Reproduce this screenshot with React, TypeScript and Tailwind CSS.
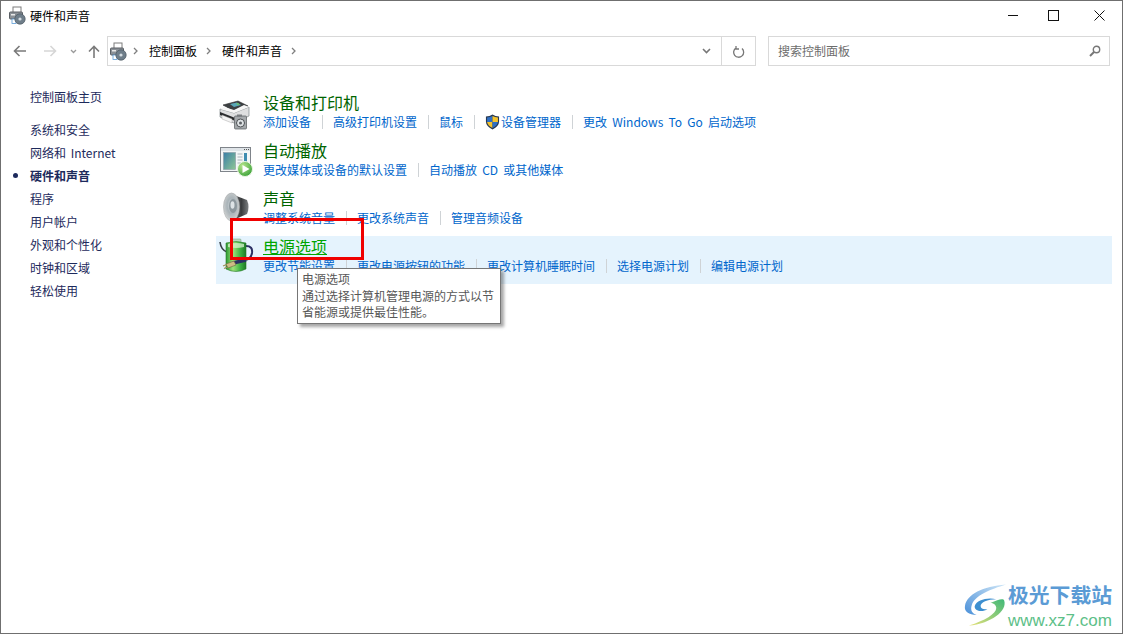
import React from "react";

const font = { fontFamily: '"Noto Sans CJK SC", "Noto Sans", sans-serif' };

function SmallDeviceIcon({ className = "" }: { className?: string }) {
  return (
    <svg viewBox="0 0 17 19" width="17" height="19" className={className}>
      <rect x="4" y="1" width="8" height="6" fill="#fff" stroke="#7d7d7d" />
      <rect x="0.5" y="6" width="13" height="7" rx="1" fill="#8a9096" stroke="#5a5f64" />
      <rect x="2" y="8" width="4" height="1.5" fill="#e8e8e8" />
      <rect x="3" y="13" width="4" height="4.5" fill="#fff" stroke="#5b9bd5" strokeWidth="0.8" />
      <circle cx="11" cy="13" r="5.2" fill="#6f7e8a" stroke="#4c5861" strokeWidth="0.7" />
      <circle cx="11" cy="13" r="1.6" fill="#d5dde2" />
    </svg>
  );
}

function PrinterIcon() {
  return (
    <svg viewBox="0 0 40 48" width="40" height="48">
      <path d="M7 13 L22 9 L32 14 L18 19 Z" fill="#3c3f42" stroke="#26282a" strokeWidth="0.6" />
      <path d="M14 12 L21 10.5 L25 13 L18 15 Z" fill="#5aa7b8" />
      <path d="M20 11.5 L22 11 L24 12.5 L22 13.2 Z" fill="#6cc06a" />
      <path d="M4 17 L18 21 L33 15 L33 24 L18 31 L4 25 Z" fill="#dedfe0" stroke="#80868a" strokeWidth="0.7" />
      <path d="M4 17 L18 21 L33 15 L28 13 L18 18 L8 15 Z" fill="#f6f6f6" />
      <path d="M4 20 L18 25.5 L18 28.5 L4 23 Z" fill="#2a2c2e" />
      <path d="M6 23 L16 27 L16 31 L6 27 Z" fill="#f3f3f3" stroke="#999" strokeWidth="0.4" />
      <rect x="18.5" y="24" width="12" height="13" rx="1" fill="#a5a9ac" stroke="#55595c" strokeWidth="0.7" />
      <rect x="21" y="22.5" width="5" height="2" fill="#777b7e" />
      <circle cx="24.5" cy="31" r="4" fill="#dfe3e5" stroke="#4d5154" strokeWidth="1" />
      <circle cx="24.5" cy="31" r="1.5" fill="#5c6064" />
    </svg>
  );
}

function AutoplayIcon() {
  return (
    <svg viewBox="0 0 40 48" width="40" height="48">
      <defs>
        <linearGradient id="ap" x1="0" y1="0" x2="1" y2="1">
          <stop offset="0" stopColor="#3a7fa8" />
          <stop offset="1" stopColor="#8fc694" />
        </linearGradient>
        <radialGradient id="pl" cx="0.35" cy="0.3" r="0.9">
          <stop offset="0" stopColor="#b8e68d" />
          <stop offset="1" stopColor="#24952a" />
        </radialGradient>
      </defs>
      <rect x="4.5" y="7.5" width="30" height="24" fill="#f4f6f7" stroke="#7f848a" />
      <rect x="5" y="8" width="29" height="3" fill="#dfe4e8" />
      <path d="M28 9.5h1M30 9.5h1M32 9.5h1" stroke="#555" />
      <rect x="7.5" y="12.5" width="12" height="17" fill="url(#ap)" stroke="#8a9aa5" strokeWidth="0.6" />
      <path d="M21.5 14h5M21.5 17h5M21.5 20h5M21.5 23h4" stroke="#a9b2b8" />
      <rect x="28" y="13" width="3" height="10" fill="#3f8cb0" />
      <circle cx="29" cy="29" r="7.5" fill="url(#pl)" stroke="#eaf6e2" strokeWidth="1" />
      <path d="M26.5 25 L33.5 29 L26.5 33 Z" fill="#fff" />
    </svg>
  );
}

function SpeakerIcon() {
  return (
    <svg viewBox="0 0 40 48" width="40" height="48">
      <defs>
        <radialGradient id="sp" cx="0.5" cy="0.45" r="0.6">
          <stop offset="0" stopColor="#dfe5e8" />
          <stop offset="0.45" stopColor="#a9b3b8" />
          <stop offset="0.8" stopColor="#c6cacb" />
          <stop offset="1" stopColor="#f4f4f4" />
        </radialGradient>
        <linearGradient id="sb" x1="0" y1="0" x2="1" y2="0">
          <stop offset="0" stopColor="#6b6e70" />
          <stop offset="0.6" stopColor="#3b3d3f" />
          <stop offset="1" stopColor="#7b7e80" />
        </linearGradient>
      </defs>
      <path d="M15 6 L31 12 Q34 19 31 26 L15 33 Z" fill="url(#sb)" />
      <ellipse cx="15.5" cy="19" rx="8" ry="14" fill="url(#sp)" stroke="#a5a8aa" strokeWidth="0.6" />
      <ellipse cx="17" cy="18" rx="4" ry="7" fill="#8d989e" />
      <ellipse cx="16.5" cy="17" rx="2" ry="3.8" fill="#dde3e6" />
    </svg>
  );
}

function PowerIcon() {
  return (
    <svg viewBox="0 0 40 48" width="40" height="48">
      <defs>
        <linearGradient id="pb" x1="0" y1="0" x2="1" y2="0">
          <stop offset="0" stopColor="#2c9a32" />
          <stop offset="0.35" stopColor="#9fe07a" />
          <stop offset="0.7" stopColor="#3fb445" />
          <stop offset="1" stopColor="#1d7a26" />
        </linearGradient>
      </defs>
      <path d="M4 6 Q5 14 11 16" fill="none" stroke="#3a4148" strokeWidth="1.6" />
      <path d="M30 10 Q37 10 36 17 Q35 23 29 24" fill="none" stroke="#2b2f63" strokeWidth="2" />
      <rect x="15" y="3" width="10" height="4" rx="1" fill="#b9d8c0" stroke="#6d9b78" strokeWidth="0.5" />
      <path d="M10 7 Q20 4 30 7 V33 Q20 38 10 33 Z" fill="url(#pb)" stroke="#2a7a2a" strokeWidth="0.6" />
      <path d="M12 8 Q20 6 28 8 V11 Q20 13 12 11 Z" fill="#d9f2cf" opacity="0.75" />
      <path d="M30 24 L17 27" stroke="#2b2f63" strokeWidth="3.4" />
      <path d="M18 25 L10 28 L12 32 L20 29 Z" fill="#cdbb85" stroke="#6a6440" strokeWidth="0.6" />
      <path d="M10.5 28.5 L7 30M11.5 31 L8 32.5" stroke="#a08f58" strokeWidth="1.2" />
    </svg>
  );
}

function Shield() {
  return (
    <svg viewBox="0 0 16 17" width="15" height="16" className="mr-px">
      <path d="M8 0.5 Q11 2.5 15 2.5 V8 Q15 13 8 16.5 Q1 13 1 8 V2.5 Q5 2.5 8 0.5 Z" fill="#28384f" />
      <path d="M8 2 V8.5 H2.2 V3.6 Q5.5 3.5 8 2 Z" fill="#2f6fc4" />
      <path d="M8 2 Q10.5 3.5 13.8 3.6 V8.5 H8 Z" fill="#f5c32c" />
      <path d="M2.2 8.5 H8 V15 Q3 12.5 2.2 8.5 Z" fill="#f5c32c" />
      <path d="M8 8.5 H13.8 Q13 12.5 8 15 Z" fill="#2f6fc4" />
    </svg>
  );
}

function Links({ items }: { items: React.ReactNode[] }) {
  return (
    <div className="flex items-center h-[17px] text-[12px] leading-[17px] text-[#0066cc] [word-spacing:2.5px] whitespace-nowrap">
      {items.map((t, i) => (
        <React.Fragment key={i}>
          {i > 0 && <span className="w-px h-[14px] bg-[#cfd3d6] mx-[10.5px]" />}
          <span className="flex items-center">{t}</span>
        </React.Fragment>
      ))}
    </div>
  );
}

function Row({
  icon,
  title,
  items,
  active,
}: {
  icon: React.ReactNode;
  title: string;
  items: React.ReactNode[];
  active?: boolean;
}) {
  return (
    <div className={`flex h-12 ${active ? "bg-[#e5f3fd]" : ""}`}>
      <div className="w-[47px] shrink-0">{icon}</div>
      <div className="flex flex-col">
        <div
          className={`h-[21px] text-[16px] leading-[21px] ${
            active ? "text-[#00a500] underline" : "text-[#006400]"
          }`}
        >
          {title}
        </div>
        <Links items={items} />
      </div>
    </div>
  );
}

const side = ["系统和安全", "网络和 Internet", "硬件和声音", "程序", "用户帐户", "外观和个性化", "时钟和区域", "轻松使用"];

export default function App() {
  return (
    <div
      style={font}
      className="relative w-[1123px] h-[634px] overflow-hidden bg-white border border-[#6f6f6f] text-[12px] text-[#1a1a1a]"
    >
      {/* Title bar */}
      <div className="flex items-center h-[29px] pl-2">
        <SmallDeviceIcon />
        <span className="ml-[4px] text-[12px] text-black">硬件和声音</span>
        <div className="ml-auto flex items-center pr-[17px]">
          <svg width="11" height="11" viewBox="0 0 11 11" className="mr-[29px]">
            <path d="M0 5.5H10" stroke="#111" />
          </svg>
          <svg width="11" height="11" viewBox="0 0 11 11" className="mr-[35px]">
            <rect x="0.5" y="0.5" width="10" height="10" fill="none" stroke="#111" />
          </svg>
          <svg width="11" height="11" viewBox="0 0 11 11">
            <path d="M0.5 0.5L10.5 10.5M10.5 0.5L0.5 10.5" stroke="#111" />
          </svg>
        </div>
      </div>

      {/* Nav bar */}
      <div className="flex items-center h-[30px] mt-[6px] pl-[12px] pr-[12px]">
        <svg width="14" height="12" viewBox="0 0 14 12" className="mr-[16px]">
          <path d="M13 6H2M6.5 1L1.5 6L6.5 11" fill="none" stroke="#7a7a7a" strokeWidth="1.6" />
        </svg>
        <svg width="14" height="12" viewBox="0 0 14 12" className="mr-[13px]">
          <path d="M1 6H12M7.5 1L12.5 6L7.5 11" fill="none" stroke="#d6d6d6" strokeWidth="1.6" />
        </svg>
        <svg width="7" height="5" viewBox="0 0 7 5" className="mr-[11px]">
          <path d="M1 1L3.5 3.5L6 1" fill="none" stroke="#9a9a9a" strokeWidth="1.3" />
        </svg>
        <svg width="12" height="13" viewBox="0 0 12 13" className="mr-[7px]">
          <path d="M6 13V2M1 6.5L6 1.5L11 6.5" fill="none" stroke="#7a7a7a" strokeWidth="1.6" />
        </svg>
        <div className="flex items-center w-[649px] h-[30px] border border-[#d9d9d9] pl-[2px]">
          <SmallDeviceIcon />
          <svg width="5" height="8" viewBox="0 0 5 8" className="ml-[6px] mr-[11px]">
            <path d="M1 1L4 4L1 7" fill="none" stroke="#7f7f7f" strokeWidth="1.3" />
          </svg>
          <span className="text-black">控制面板</span>
          <svg width="5" height="8" viewBox="0 0 5 8" className="ml-[9px] mr-[11px]">
            <path d="M1 1L4 4L1 7" fill="none" stroke="#7f7f7f" strokeWidth="1.3" />
          </svg>
          <span className="text-black">硬件和声音</span>
          <svg width="5" height="8" viewBox="0 0 5 8" className="ml-[9px]">
            <path d="M1 1L4 4L1 7" fill="none" stroke="#7f7f7f" strokeWidth="1.3" />
          </svg>
          <div className="ml-auto flex items-center h-full">
            <svg width="9" height="6" viewBox="0 0 9 6" className="mr-[10px]">
              <path d="M1 1L4.5 4.5L8 1" fill="none" stroke="#777" strokeWidth="1.6" />
            </svg>
            <span className="w-px h-full bg-[#d9d9d9]" />
            <div className="w-[33px] flex items-center justify-center">
              <svg width="12" height="13" viewBox="0 0 12 13">
                <path d="M3 2.5A5 5 0 1 0 9 3M3 0.5V3.5H6" fill="none" stroke="#777" strokeWidth="1.3" transform="translate(0 0.5)" />
              </svg>
            </div>
          </div>
        </div>
        <div className="flex items-center w-[342px] h-[30px] ml-[12px] border border-[#d9d9d9] pl-[9px] pr-[8px] text-[#6d6d6d]">
          <span>搜索控制面板</span>
          <svg width="12" height="12" viewBox="0 0 12 12" className="ml-auto">
            <circle cx="7.5" cy="4.5" r="3.2" fill="none" stroke="#777" strokeWidth="1.4" />
            <path d="M5 7L1 11" stroke="#777" strokeWidth="2" />
          </svg>
        </div>
      </div>

      {/* Body */}
      <div className="flex mt-[26px]">
        <aside className="w-[215px] shrink-0 pl-[29px] text-[#1d2a5c]">
          <div className="h-[23px] leading-[23px] -mt-[7px]">控制面板主页</div>
          <div className="mt-[10px] flex flex-col">
            {side.map((s, i) => (
              <div key={s} className={`relative h-[23px] leading-[23px] [word-spacing:2px] ${i === 2 ? "font-bold" : ""}`}>
                {i === 2 && <span className="absolute -left-[17px] top-[9px] w-[5px] h-[5px] rounded-full bg-[#1d2a5c]" />}
                {s}
              </div>
            ))}
          </div>
        </aside>
        <main className="w-[896px] flex flex-col">
          <Row
            icon={<PrinterIcon />}
            title="设备和打印机"
            items={[
              "添加设备",
              "高级打印机设置",
              "鼠标",
              <>
                <Shield />
                设备管理器
              </>,
              "更改 Windows To Go 启动选项",
            ]}
          />
          <Row
            icon={<AutoplayIcon />}
            title="自动播放"
            items={["更改媒体或设备的默认设置", "自动播放 CD 或其他媒体"]}
          />
          <Row icon={<SpeakerIcon />} title="声音" items={["调整系统音量", "更改系统声音", "管理音频设备"]} />
          <Row
            active
            icon={<PowerIcon />}
            title="电源选项"
            items={["更改节能设置", "更改电源按钮的功能", "更改计算机睡眠时间", "选择电源计划", "编辑电源计划"]}
          />
        </main>
      </div>

      {/* Tooltip */}
      <div className="absolute left-[296px] top-[267px] w-[204px] h-[56px] bg-white border border-[#767676] pl-[4px] pt-[2px] text-[12px] leading-[16.5px] text-[#575757] shadow-[3px_3px_3px_rgba(0,0,0,0.35)] whitespace-nowrap">
        <div>电源选项</div>
        <div>通过选择计算机管理电源的方式以节</div>
        <div>省能源或提供最佳性能。</div>
      </div>

      {/* Red annotation */}
      <div className="absolute left-[229px] top-[217px] w-[134px] h-[42px] border-[3px] border-[#f00000]" />

      {/* Desktop peeks on the left edge */}
      <div className="absolute -left-px top-[115px] w-px h-[25px] bg-[#2f6a35]" />
      <div className="absolute -left-px top-[510px] w-px h-[30px] bg-[#2f6a35]" />

      {/* Watermark */}
      <div className="absolute left-[962px] top-[579px] flex items-start">
        <svg width="45" height="44" viewBox="0 0 46 44" className="mt-[4px]">
          <defs>
            <linearGradient id="w1" x1="0" y1="1" x2="1" y2="0">
              <stop offset="0" stopColor="#4a90d9" />
              <stop offset="1" stopColor="#cfe6f7" />
            </linearGradient>
            <linearGradient id="w2" x1="0" y1="1" x2="1" y2="0">
              <stop offset="0" stopColor="#e8e27a" />
              <stop offset="1" stopColor="#3fb878" />
            </linearGradient>
          </defs>
          <path d="M2 22 C4 10 20 2 44 0 C28 5 12 11 9 21 C7 27 10 30 14 31 C6 31 1 28 2 22 Z" fill="url(#w1)" />
          <path d="M12 22 C14 16 24 13 34 15 C25 15 18 18 18 22 C18 25 22 26 25 25 C20 29 11 27 12 22 Z" fill="#3d8fd0" />
          <path d="M42 16 C46 27 28 40 6 42 C22 37 34 30 34 24 C34 21 31 19 28 19 C36 15 41 14 42 16 Z" fill="url(#w2)" />
        </svg>
        <div className="flex flex-col">
          <span className="text-[20.8px] leading-[28px] font-bold text-[#5b9bd5] whitespace-nowrap">极光下载站</span>
          <span
            className="text-[17px] leading-[20px] mt-[3px] text-[#5dc088] whitespace-nowrap"
            style={{ fontFamily: '"Liberation Sans", sans-serif' }}
          >
            www.xz7.com
          </span>
        </div>
      </div>
    </div>
  );
}
